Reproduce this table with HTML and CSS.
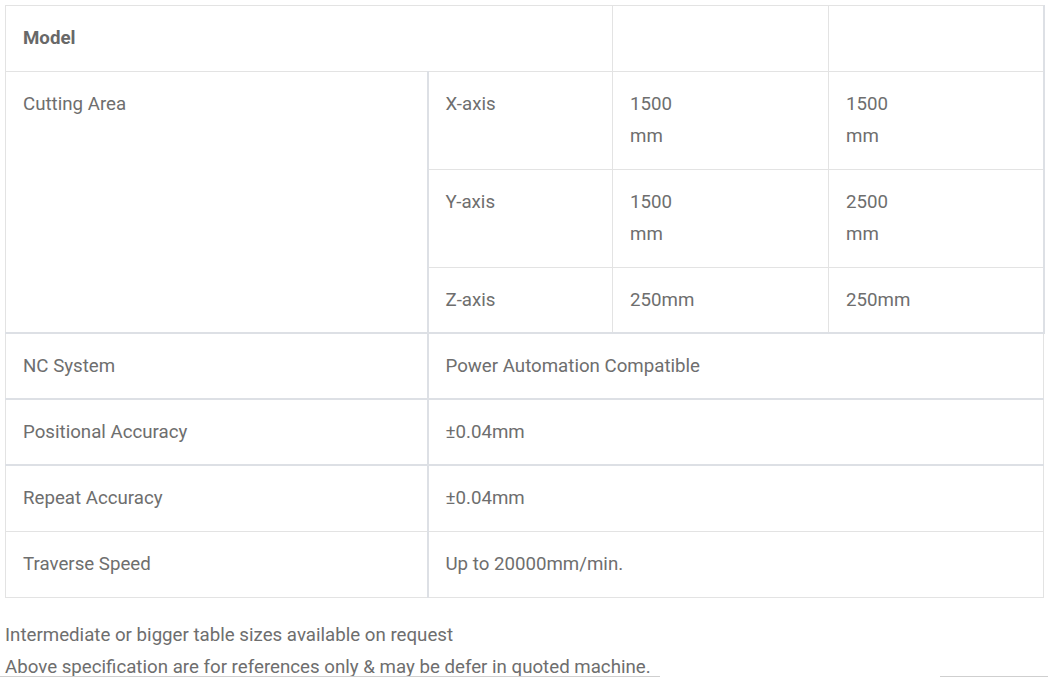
FILE: index.html
```html
<!DOCTYPE html>
<html>
<head>
<meta charset="utf-8">
<link rel="stylesheet" href="styles.css">
</head>
<body>
<div class="page">
<table class="spec">
  <colgroup>
    <col class="c1"><col class="c2"><col class="c3"><col class="c4">
  </colgroup>
  <tr>
    <th colspan="2" class="model">Model</th>
    <td class="thin-r"></td>
    <td class="thick-r"></td>
  </tr>
  <tr>
    <td rowspan="3" class="thick-r thick-b">Cutting Area</td>
    <td>X-axis</td>
    <td>1500<br>mm</td>
    <td class="thick-r">1500<br>mm</td>
  </tr>
  <tr>
    <td>Y-axis</td>
    <td>1500<br>mm</td>
    <td class="thick-r">2500<br>mm</td>
  </tr>
  <tr>
    <td class="thick-b">Z-axis</td>
    <td class="thick-b">250mm</td>
    <td class="thick-r thick-b">250mm</td>
  </tr>
  <tr>
    <td class="thick-r thick-b">NC System</td>
    <td colspan="3" class="thick-b">Power Automation Compatible</td>
  </tr>
  <tr>
    <td class="thick-r thick-b">Positional Accuracy</td>
    <td colspan="3" class="thick-b">±0.04mm</td>
  </tr>
  <tr>
    <td class="thick-r">Repeat Accuracy</td>
    <td colspan="3">±0.04mm</td>
  </tr>
  <tr>
    <td class="thick-r">Traverse Speed</td>
    <td colspan="3">Up to 20000mm/min.</td>
  </tr>
</table>
<div class="notes">
  <p>Intermediate or bigger table sizes available on request</p>
  <p>Above specification are for references only &amp; may be defer in quoted machine.</p>
</div>
<div class="cutoff"><span class="seg seg-a"></span><span class="seg-gap"></span><span class="seg seg-b"></span></div>
</div>
</body>
</html>
```
FILE: styles.css
```css
html, body {
  margin: 0;
  padding: 0;
  background: #ffffff;
}
body {
  font-family: Roboto, "Liberation Sans", sans-serif;
  font-size: 18.7px;
  color: #6e6e6e;
  overflow: hidden;
}
.page {
  padding: 5px 5px 0 5px;
  width: 1038px;
}
.spec {
  width: 1038px;
  border-collapse: collapse;
  table-layout: fixed;
}
.c1 { width: 422px; }
.c2 { width: 185px; }
.c3 { width: 216px; }
.c4 { width: 215px; }
.spec td, .spec th {
  border: 1px solid #e3e3e3;
  padding: 16px 17px 17px 17px;
  line-height: 32px;
  text-align: left;
  vertical-align: top;
  font-weight: 400;
}
.spec th.model {
  font-weight: 700;
  color: #686868;
}
.spec .thick-r {
  border-right: 2px solid #dde0e5;
}
.spec .thick-b {
  border-bottom: 2px solid #dde0e5;
  padding-bottom: 16px;
}
.notes {
  margin-top: 21px;
}
.notes p {
  margin: 0;
  line-height: 32px;
  white-space: nowrap;
}
.cutoff {
  display: flex;
  margin-left: -5px;
  width: 1048px;
  margin-top: -7px;
}
.seg {
  height: 1px;
  background: #cfcfcf;
}
.seg-a { width: 660px; }
.seg-gap { width: 280px; }
.seg-b { width: 108px; }
```
